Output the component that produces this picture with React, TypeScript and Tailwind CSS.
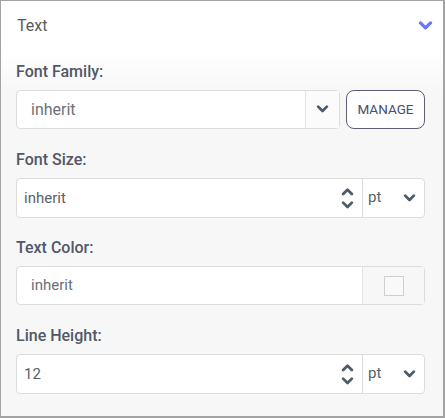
function Caret({ up = false, className = "", size = 12 }: { up?: boolean; className?: string; size?: number }) {
  return (
    <svg width={size} height={(size * 2) / 3} viewBox="0 0 12 8" className={className}>
      <path
        d={up ? "M2 6.5 L6 2.5 L10 6.5" : "M2 1.5 L6 5.5 L10 1.5"}
        fill="none"
        stroke="currentColor"
        strokeWidth="2.6"
        strokeLinecap="round"
        strokeLinejoin="round"
      />
    </svg>
  );
}

function Label({ children }: { children: React.ReactNode }) {
  return <div className="text-[16px] leading-5 font-medium text-[#515868]">{children}</div>;
}

function NumberField({ value }: { value: string }) {
  return (
    <div className="flex h-[40px] rounded-[4px] border border-[#dcdcdc] bg-white">
      <div className="flex flex-1 items-center pl-[7px] text-[15px] text-[#5a5f69]">{value}</div>
      <div className="flex w-[30px] flex-col items-center justify-center gap-[5px] text-[#4e5b6b]">
        <Caret up size={13} />
        <Caret size={13} />
      </div>
      <div className="flex w-[62px] items-center justify-between border-l border-[#dcdcdc] pl-[5px] pr-[8px] text-[15px] text-[#5a5f69]">
        <span className="-mt-[2px]">pt</span>
        <Caret className="text-[#4e5b6b]" size={13} />
      </div>
    </div>
  );
}

export default function App() {
  return (
    <div
      className="flex h-[418px] w-[445px] flex-col border border-[#a3a3a3] bg-[#f7f7f7] border-r-2 border-b-2"
      style={{ fontFamily: "Roboto, 'Liberation Sans', sans-serif" }}
    >
      {/* Header */}
      <div className="flex h-[50px] shrink-0 items-center justify-between bg-white pl-[16px] pr-[10px]">
        <span className="text-[16px] text-[#5b5b5b]">Text</span>
        <Caret className="text-[#6a78f2]" size={15} />
      </div>

      <div className="flex flex-col bg-gradient-to-b from-white to-[#f7f7f7] to-[12%] pl-[15px] pr-[18px] pt-[11px]">
        <Label>Font Family:</Label>
        <div className="mt-[8px] flex gap-[6px]">
          <div className="flex h-[39px] flex-1 rounded-[4px] border border-[#dcdcdc] bg-white">
            <div className="flex flex-1 items-center pl-[14px] text-[16px] text-[#6b7079]">inherit</div>
            <div className="flex w-[34px] items-center justify-center border-l border-[#e3e3e3] bg-[#fbfbfb] text-[#4e5b6b]">
              <Caret size={13} />
            </div>
          </div>
          <button className="h-[39px] w-[79px] rounded-[8px] border-[1.5px] border-[#5d6072] bg-white text-[13.5px] text-[#4a4d6a]">
            MANAGE
          </button>
        </div>

        <div className="mt-[21px]">
          <Label>Font Size:</Label>
        </div>
        <div className="mt-[8px]">
          <NumberField value="inherit" />
        </div>

        <div className="mt-[20px]">
          <Label>Text Color:</Label>
        </div>
        <div className="mt-[8px] flex h-[39px] rounded-[4px] border border-[#dcdcdc] bg-white">
          <div className="flex flex-1 items-center pl-[14px] text-[15px] text-[#6b7079]">inherit</div>
          <div className="flex w-[62px] items-center justify-center border-l border-[#e3e3e3] bg-[#f7f7f7]">
            <div className="h-[20px] w-[20px] border border-[#cfcfcf] bg-[#f9f9f9]" />
          </div>
        </div>

        <div className="mt-[21px]">
          <Label>Line Height:</Label>
        </div>
        <div className="mt-[8px]">
          <NumberField value="12" />
        </div>
      </div>
    </div>
  );
}
